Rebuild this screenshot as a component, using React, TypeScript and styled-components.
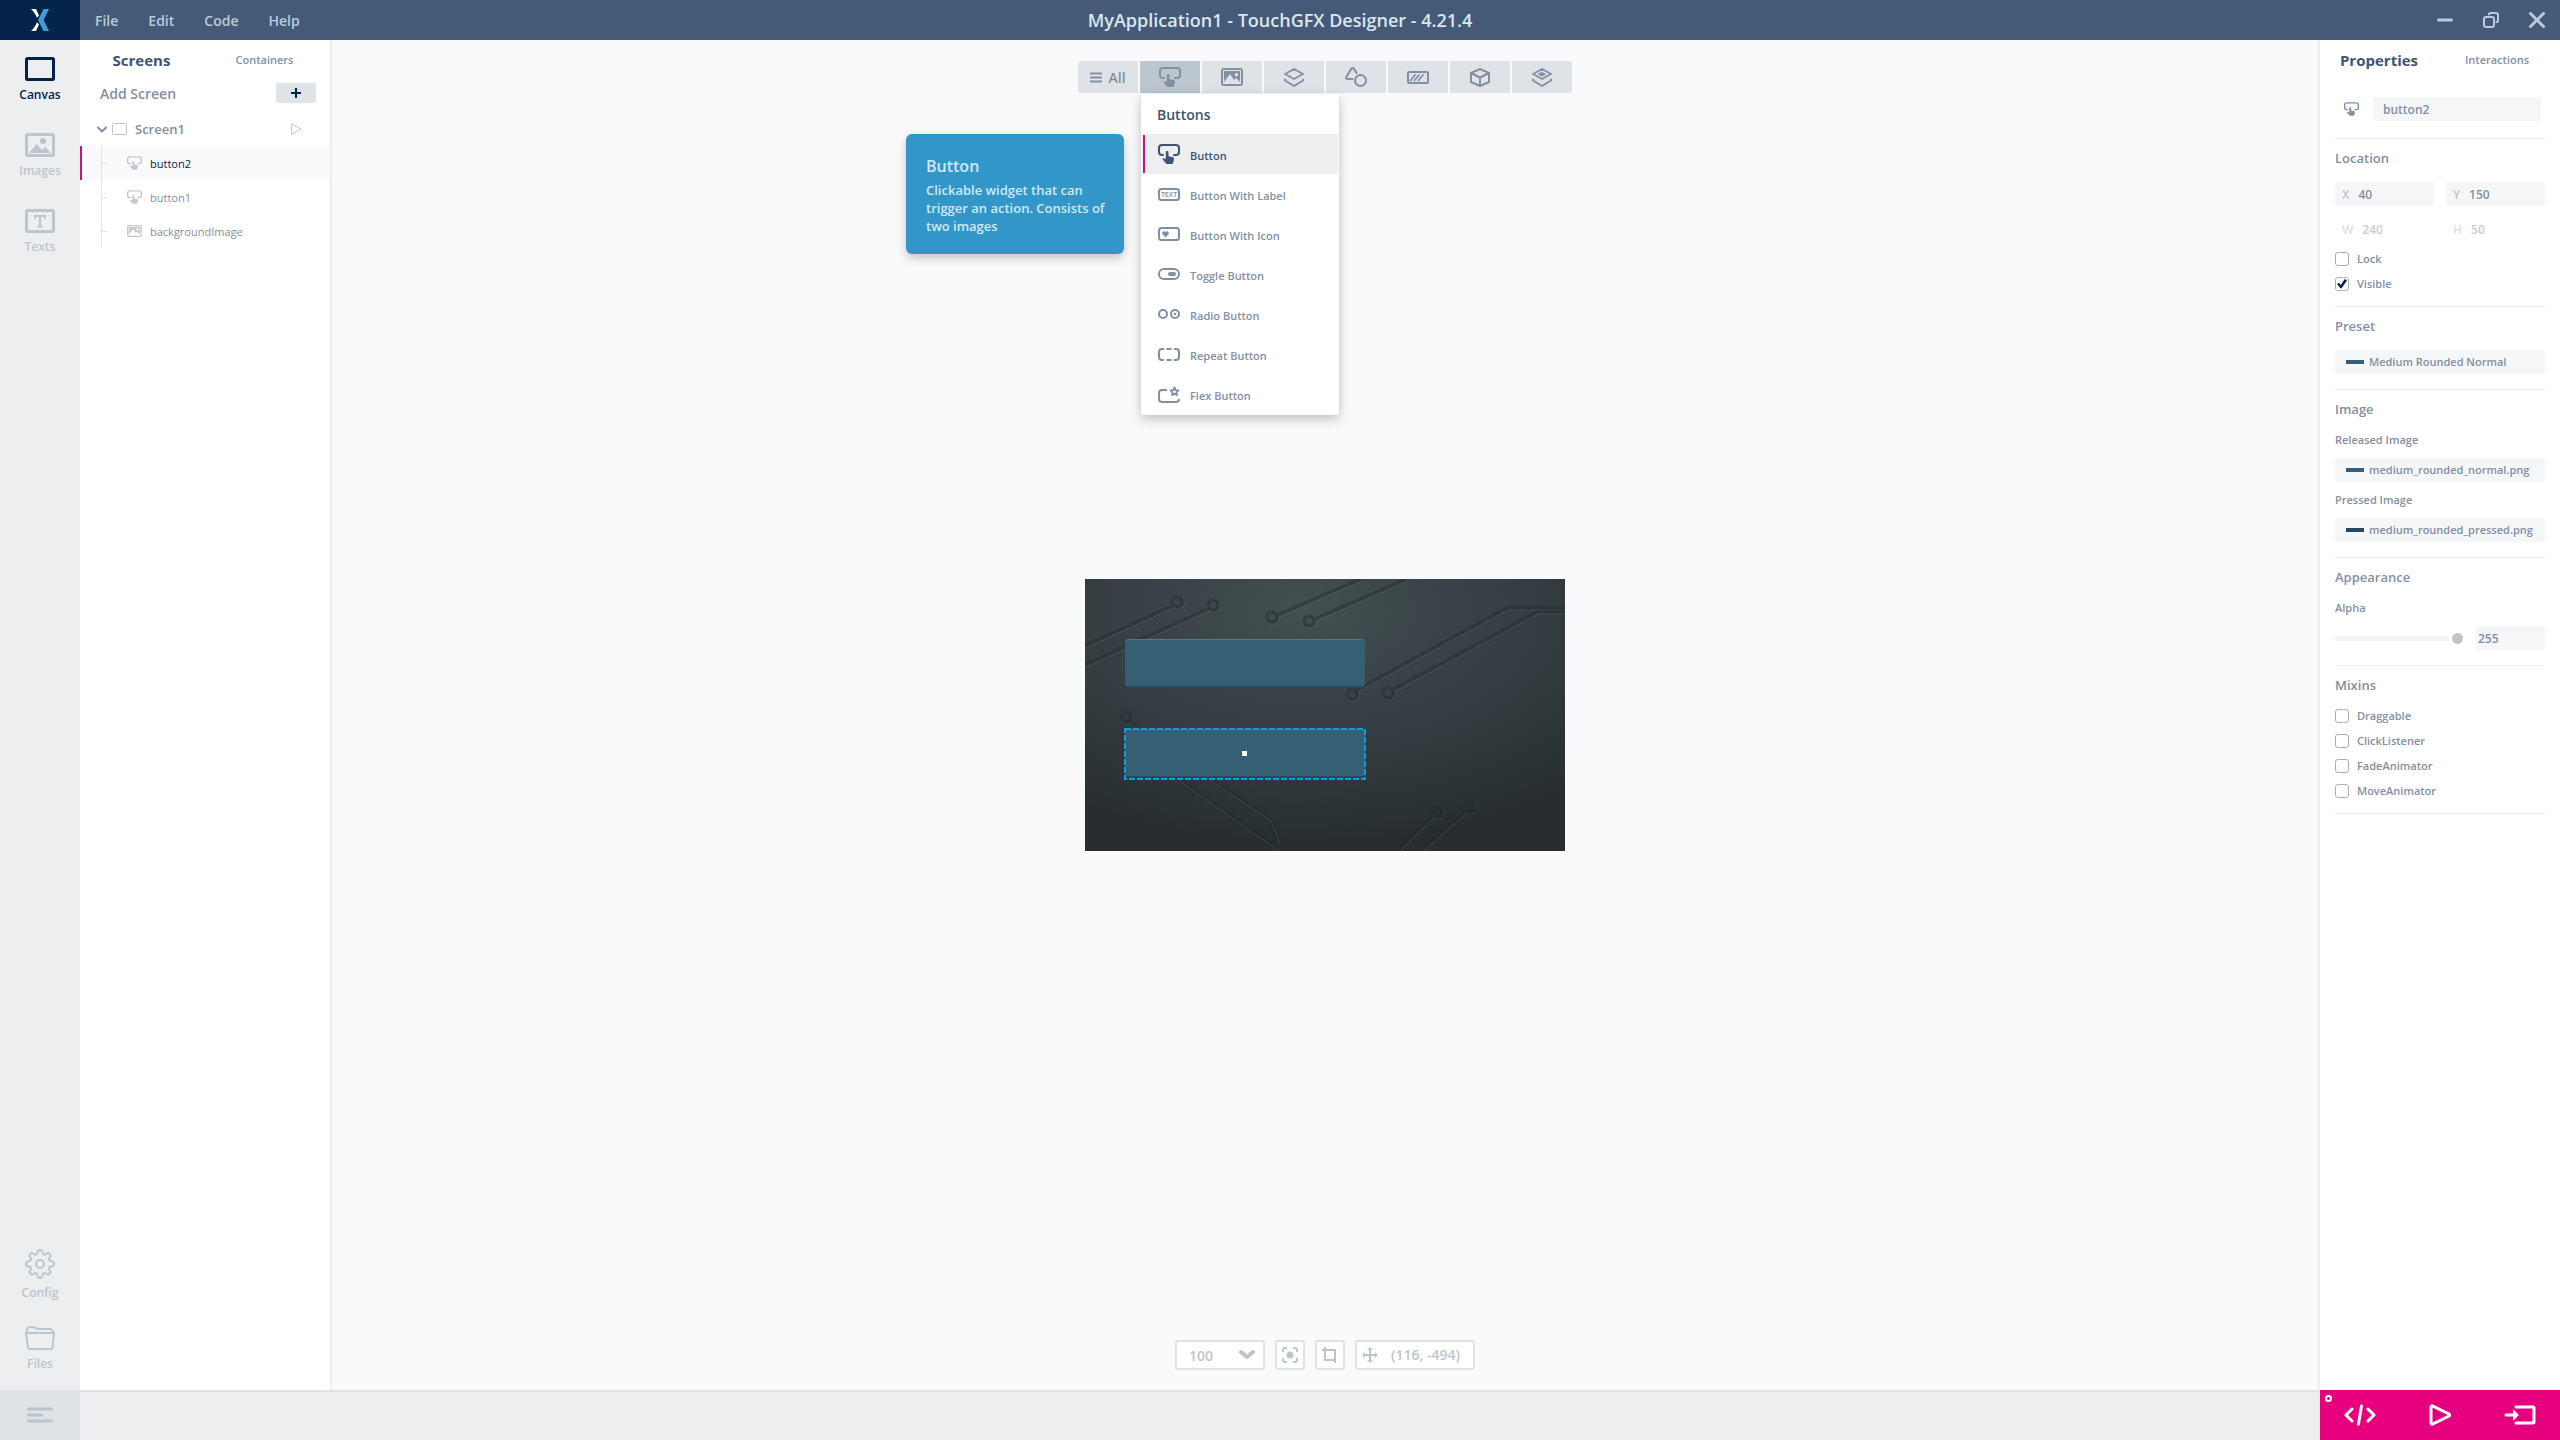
import React from "react";
import styled, { createGlobalStyle, css } from "styled-components";

const c = {
  navy: "#03234b",
  header: "#445a78",
  headerText: "#b9ccd8",
  rail: "#eceef0",
  line: "#dfe3e6",
  cell: "#dfe3e7",
  muted: "#bcc5cc",
  text: "#838fa3",
  strong: "#3f5475",
  field: "#f5f6f8",
  canvas: "#fafafc",
  pink: "#e6007e",
  accent: "#c6147c",
  blue: "#3297c8",
};

const GlobalStyle = createGlobalStyle`
  *, *::before, *::after { box-sizing: border-box; }
  body { margin: 0; }
  body, button, input, select {
    font-family: "Open Sans", "Noto Sans", sans-serif;
    font-size: 12px;
    font-weight: 600;
    color: ${c.text};
  }
  button { border: 0; padding: 0; background: none; cursor: pointer; }
  ul { list-style: none; margin: 0; padding: 0; }
  h1, h2, h3, p { margin: 0; }
  svg { display: block; flex: none; }
`;

const Shell = styled.div`
  display: flex;
  flex-direction: column;
  height: 100vh;
  background: #fff;
`;

/* ---------- title bar ---------- */

const TitleBar = styled.header`
  display: grid;
  grid-template-columns: 1fr auto 1fr;
  align-items: center;
  height: 40px;
  flex: none;
  background: ${c.header};
`;
const TitleLeft = styled.div`
  display: flex;
  align-items: center;
  height: 100%;
`;
const Logo = styled.div`
  display: grid;
  place-items: center;
  width: 80px;
  height: 100%;
  background: ${c.navy};
`;
const MenuBar = styled.nav`
  display: flex;
  gap: 30px;
  padding: 1px 0 0 15px;
`;
const MenuButton = styled.button`
  font-size: 14px;
  line-height: 20px;
  color: ${c.headerText};
`;
const AppTitle = styled.h1`
  font-size: 18px;
  line-height: 24px;
  font-weight: 600;
  color: #dbe6ee;
`;
const WindowButtons = styled.div`
  display: flex;
  justify-content: flex-end;
  color: ${c.headerText};
`;
const WindowButton = styled.button`
  display: grid;
  place-items: center;
  width: 46px;
  height: 40px;
  color: inherit;
`;

/* ---------- frame ---------- */

const Body = styled.div`
  display: flex;
  flex: 1;
  min-height: 0;
`;

const Rail = styled.nav`
  display: flex;
  flex-direction: column;
  justify-content: space-between;
  width: 80px;
  flex: none;
  padding: 17px 0;
  background: ${c.rail};
`;
const RailGroup = styled.div<{ $gap: number }>`
  display: flex;
  flex-direction: column;
  gap: ${(p) => p.$gap}px;
`;
const RailButton = styled.button<{ $active?: boolean }>`
  display: flex;
  flex-direction: column;
  align-items: center;
  gap: 5px;
  line-height: 18px;
  color: ${(p) => (p.$active ? c.navy : c.muted)};
`;

const SidePanel = styled.aside<{ $side: "left" | "right" }>`
  display: flex;
  flex-direction: column;
  flex: none;
  ${(p) =>
    p.$side === "left"
      ? css`
          width: 252px;
          border-right: 2px solid ${c.rail};
        `
      : css`
          width: 242px;
          border-left: 2px solid ${c.rail};
        `}
`;
const Tabs = styled.div`
  display: flex;
  height: 40px;
  padding-right: 4px;
`;
const Tab = styled.button<{ $active?: boolean }>`
  flex: 1 1 0;
  font-size: 11px;
  line-height: 20px;
  ${(p) =>
    p.$active &&
    css`
      font-size: 15px;
      font-weight: 700;
      color: ${c.strong};
    `}
`;

/* ---------- screens tree ---------- */

const AddRow = styled.div`
  display: flex;
  align-items: center;
  justify-content: space-between;
  height: 26px;
  padding: 0 14px 0 20px;
  font-size: 14px;
`;
const AddButton = styled.button`
  display: grid;
  place-items: center;
  width: 40px;
  height: 20px;
  border-radius: 3px;
  background: ${c.line};
  color: ${c.navy};
`;
const ScreenRow = styled.div`
  display: flex;
  align-items: center;
  gap: 5px;
  height: 34px;
  margin-top: 6px;
  padding: 0 28px 0 17px;
`;
const ScreenName = styled.span`
  flex: 1;
  padding-left: 3px;
  font-size: 13px;
  line-height: 18px;
`;
const TreeRow = styled.li<{ $active?: boolean }>`
  display: flex;
  align-items: center;
  height: 34px;
  border-left: 2px solid ${(p) => (p.$active ? c.accent : "transparent")};
  padding-left: 19px;
  font-size: 11px;
  font-weight: 500;
  line-height: 18px;
  background: ${(p) => (p.$active ? c.canvas : "transparent")};
  background-clip: padding-box;
  color: ${(p) => (p.$active ? c.navy : c.text)};
  svg { color: #c3c7cb; margin: 0 8px 0 20px; }
`;
const TreeName = styled.span`
  padding-top: 1px;
`;
const Guide = styled.span`
  display: flex;
  align-items: center;
  width: 6px;
  height: 100%;
  border-left: 1px solid ${c.line};
  &::after {
    content: "";
    flex: 1;
    height: 1px;
    background: ${c.line};
  }
`;

/* ---------- workspace ---------- */

const Workspace = styled.main`
  display: flex;
  flex-direction: column;
  align-items: center;
  justify-content: space-between;
  flex: 1;
  min-width: 0;
  background: ${c.canvas};
`;
const ToolbarArea = styled.div`
  height: 53px;
  padding-top: 21px;
`;
const Toolbar = styled.div`
  display: flex;
  gap: 2px;
`;
const ToolSlot = styled.div`
  position: relative;
`;
const ToolButton = styled.button<{ $active?: boolean; $edge?: "first" | "last" }>`
  display: flex;
  align-items: center;
  justify-content: center;
  gap: 6px;
  width: 60px;
  height: 32px;
  font-size: 14px;
  background: ${(p) => (p.$active ? "#bcc6cf" : c.cell)};
  border-radius: ${(p) =>
    p.$edge === "first" ? "3px 0 0 3px" : p.$edge === "last" ? "0 3px 3px 0" : 0};
`;
const Dropdown = styled.div`
  position: absolute;
  z-index: 2;
  top: 33px;
  left: 1px;
  width: 198px;
  padding: 0 1px 1px;
  border-radius: 0 0 3px 3px;
  background: #fff;
  box-shadow: 0 4px 12px rgba(40, 40, 50, 0.28);
`;
const DropdownTitle = styled.h2`
  padding: 1px 15px 0;
  font-size: 14px;
  line-height: 39px;
  font-weight: 600;
  color: ${c.strong};
`;
const WidgetButton = styled.button<{ $active?: boolean }>`
  display: flex;
  align-items: center;
  gap: 10px;
  width: 100%;
  height: 40px;
  padding: 0 13px 0 1px;
  font-size: 11px;
  line-height: 18px;
  color: ${(p) => (p.$active ? c.strong : c.text)};
  background: ${(p) => (p.$active ? c.rail : "transparent")};
  &::before {
    content: "";
    width: 2px;
    height: 38px;
    margin-right: 3px;
    background: ${(p) => (p.$active ? c.accent : "transparent")};
  }
`;
const WidgetName = styled.span`
  padding-top: 3px;
`;
const Tooltip = styled.div`
  position: absolute;
  top: 40px;
  right: calc(100% + 17px);
  width: 218px;
  height: 120px;
  padding: 20px 16px 0 20px;
  border-radius: 6px;
  background: ${c.blue};
  box-shadow: 0 4px 10px rgba(40, 40, 50, 0.25);
  color: #cfe8f4;
  font-size: 13px;
  line-height: 18px;
`;
const TooltipTitle = styled.h3`
  font-size: 16px;
  line-height: 24px;
  margin-bottom: 3px;
  font-weight: 600;
`;

const Display = styled.div`
  position: relative;
  width: 480px;
  height: 272px;
  background: #343d40;
`;
const Widget = styled.div<{ $x: number; $y: number }>`
  position: absolute;
  left: ${(p) => p.$x}px;
  top: ${(p) => p.$y}px;
  width: 240px;
  height: 49px;
  border-radius: 4px;
  background: #355f75;
  border-top: 1px solid #4f7b8e;
  border-bottom: 2px solid #264a61;
`;
const Selection = styled.svg`
  position: absolute;
  left: 39px;
  top: 149px;
`;

const ViewBar = styled.div`
  display: flex;
  gap: 10px;
  height: 53px;
  padding: 3px 0 20px;
  color: ${c.muted};
`;
const viewBox = css`
  height: 30px;
  border: 2px solid ${c.line};
  border-radius: 3px;
  background: #fff;
  font-size: 14px;
  color: ${c.muted};
`;
const ZoomBox = styled.label`
  display: grid;
  grid-template-columns: 1fr 16px 8px;
  align-items: center;
  width: 90px;
  ${viewBox}
  svg { grid-column: 2; grid-row: 1; pointer-events: none; }
`;
const ZoomSelect = styled.select`
  grid-column: 1 / -1;
  grid-row: 1;
  appearance: none;
  border: 0;
  padding: 0 0 0 12px;
  height: 26px;
  background: transparent;
  font-size: 14px;
  color: ${c.muted};
`;
const ViewButton = styled.button`
  display: grid;
  place-items: center;
  width: 30px;
  ${viewBox}
`;
const Coordinates = styled.output`
  display: flex;
  align-items: center;
  gap: 13px;
  width: 120px;
  padding-left: 5px;
  line-height: 20px;
  ${viewBox}
`;

/* ---------- properties ---------- */

const NameRow = styled.div`
  display: flex;
  align-items: center;
  gap: 14px;
  padding: 17px 19px 17px 24px;
`;
const fieldBox = css`
  height: 24px;
  border: 0;
  border-radius: 3px;
  background: ${c.field};
`;
const NameInput = styled.input`
  flex: 1;
  min-width: 0;
  padding: 0 10px;
  ${fieldBox}
`;
const Sections = styled.div`
  margin: 0 15px;
  border-bottom: 1px solid ${c.rail};
`;
const Section = styled.section`
  border-top: 1px solid ${c.rail};
  padding: 9px 0 10px;
`;
const SectionTitle = styled.h2`
  margin-bottom: 8px;
  font-size: 13px;
  line-height: 20px;
  font-weight: 600;
`;
const Fields = styled.div`
  padding: 6px 0 5px;
`;
const FieldGrid = styled(Fields)`
  display: grid;
  grid-template-columns: repeat(2, minmax(0, 1fr));
  gap: 11px 12px;
`;
const NumberField = styled.label<{ $disabled?: boolean }>`
  display: flex;
  align-items: center;
  gap: 9px;
  padding-left: 7px;
  ${fieldBox}
  color: ${c.muted};
  ${(p) => p.$disabled && "background: transparent; color: #dcdfe2;"}
  input {
    flex: 1;
    min-width: 0;
    padding: 0;
    border: 0;
    background: none;
    color: ${(p) => (p.$disabled ? "#c9cdd1" : c.text)};
  }
`;
const pickLabel = css`
  display: block;
  font-size: 11px;
  line-height: 14px;
  margin-bottom: 11px;
`;
const PickLabel = styled.div`
  ${pickLabel}
`;
const SliderLabel = styled.label`
  ${pickLabel}
`;
const Picker = styled.button`
  display: flex;
  align-items: center;
  gap: 5px;
  width: 100%;
  padding-left: 11px;
  font-size: 11px;
  line-height: 16px;
  ${fieldBox}
  & + ${PickLabel} { margin-top: 11px; }
`;
const Swatch = styled.span<{ $dark?: boolean }>`
  flex: none;
  width: 18px;
  height: 4px;
  background: ${(p) => (p.$dark ? "#2a4459" : "#35607a")};
`;
const CheckRow = styled.label`
  display: flex;
  align-items: center;
  gap: 8px;
  height: 25px;
  font-size: 11px;
`;
const Checkbox = styled.input`
  appearance: none;
  display: grid;
  place-items: center;
  width: 14px;
  height: 14px;
  margin: 0;
  border: 1px solid #a9b0b8;
  border-radius: 3px;
  background: #fff;
  &:checked::after {
    content: "";
    width: 10px;
    height: 10px;
    background: ${c.navy};
    clip-path: polygon(0 55%, 18% 42%, 38% 64%, 78% 5%, 100% 20%, 44% 100%, 32% 96%);
  }
`;
const SliderRow = styled.div`
  display: flex;
  align-items: center;
  gap: 13px;
`;
const Slider = styled.input`
  flex: 1;
  min-width: 0;
  appearance: none;
  margin: 0;
  height: 11px;
  background: linear-gradient(#f3f4f5, #f3f4f5) center / 100% 5px no-repeat;
  &::-webkit-slider-thumb {
    appearance: none;
    width: 11px;
    height: 11px;
    border-radius: 50%;
    background: #bfc6cb;
    box-shadow: 0 0 0 3px #fff;
  }
`;
const AlphaInput = styled.input`
  width: 69px;
  padding: 0 2px;
  ${fieldBox}
`;

/* ---------- bottom bar ---------- */

const BottomBar = styled.footer`
  display: flex;
  justify-content: space-between;
  height: 50px;
  flex: none;
  background: ${c.rail};
  box-shadow: inset 0 2px ${c.line};
`;
const LogButton = styled.button`
  display: grid;
  place-items: center;
  width: 80px;
  background: ${c.cell};
  color: #bcc5cc;
`;
const Actions = styled.div`
  position: relative;
  display: flex;
  width: 240px;
  background: ${c.pink};
`;
const ActionButton = styled.button`
  display: grid;
  place-items: center;
  flex: 1;
  color: #fff;
`;
const StatusDot = styled.span`
  position: absolute;
  left: 5px;
  top: 5px;
  width: 7px;
  height: 7px;
  border: 2px solid #fff;
  border-radius: 50%;
`;

/* ---------- icons ---------- */

type IconProps = { w: number; h: number; vb?: string; sw?: number; children: React.ReactNode };
const Icon = ({ w, h, vb, sw = 2, children }: IconProps) => (
  <svg
    width={w}
    height={h}
    viewBox={vb ?? `0 0 ${w} ${h}`}
    fill="none"
    stroke="currentColor"
    strokeWidth={sw}
    strokeLinecap="round"
    strokeLinejoin="round"
    aria-hidden="true"
  >
    {children}
  </svg>
);

const TapIcon = ({ w = 22, h = 20 }: { w?: number; h?: number }) => (
  <Icon w={w} h={h} vb="0 0 22 20">
    <path d="M5 11H4a3 3 0 0 1-3-3V4a3 3 0 0 1 3-3h14a3 3 0 0 1 3 3v4a3 3 0 0 1-3 3h-2" />
    <path
      d="M7.800 8.200c0-1.700 2.700-1.700 2.700 0v4l4 .9c1 .3 1.600 1 1.400 2l-.6 3.300-1.100 1.600H8.400L4.400 15c.6-1.300 2-1 3.400.3z"
      fill="currentColor"
      stroke="none"
    />
  </Icon>
);
const PictureIcon = ({ w, h }: { w: number; h: number }) => (
  <Icon w={w} h={h} vb="0 0 22 18">
    <rect x="1" y="1" width="20" height="16" rx="1.5" />
    <path
      fillRule="evenodd"
      d="M3 3h16v11l-4-4-2 2-4-6-6 8zM15.5 5a1.8 1.8 0 1 0 0 3.600 1.800 1.800 0 0 0 0-3.600z"
      fill="currentColor"
      stroke="none"
    />
  </Icon>
);

const LogoIcon = () => (
  <svg width="18" height="22" viewBox="0 0 18 22" aria-hidden="true">
    <path d="M0 0h5l3 6.600-2 2.200C4.500 5 2 1.800 0 0zM0 22h5l3-6.600-2-2.200C4.500 17 2 20.200 0 22z" fill="#fff" />
    <path d="M12.500 0H18l-5.400 11L18 22h-5.500L7 11z" fill="#3c9fd0" />
  </svg>
);
const CanvasIcon = () => (
  <Icon w={30} h={24} sw={3}>
    <rect x="1.5" y="1.5" width="27" height="21" rx="1" />
  </Icon>
);
const ImagesIcon = () => (
  <Icon w={30} h={24}>
    <rect x="1.5" y="1.5" width="27" height="21" rx="1" strokeWidth="3" />
    <path d="M4 20l7.500-9 5.500 6 3-3 6 6z" fill="currentColor" stroke="none" />
    <circle cx="18" cy="8" r="3" fill="currentColor" stroke="none" />
  </Icon>
);
const TextsIcon = () => (
  <Icon w={30} h={24}>
    <rect x="1.5" y="1.5" width="27" height="21" rx="1" strokeWidth="3" />
    <path d="M10 9.500V7h10v2.500M15 7v10.500M12.500 17.500h5" strokeLinecap="butt" strokeLinejoin="miter" />
  </Icon>
);
const GearIcon = () => (
  <Icon w={30} h={30}>
    <circle cx="15" cy="15" r="4" />
    <path d="M12.300 4.200c.2-1.900.9-3.200 2.700-3.200s2.500 1.300 2.700 3.200c.2 1.300 1.700 1.900 2.700 1.100 1.500-1.200 3-1.600 4.200-.3 1.300 1.300.9 2.700-.3 4.200-.8 1.100-.2 2.500 1.100 2.700 1.900.2 3.600.9 3.600 2.800s-1.700 2.800-3.600 3c-1.300.2-1.900 1.600-1.100 2.700 1.200 1.500 1.600 2.900.3 4.200-1.200 1.300-2.700.9-4.200-.3-1-.8-2.500-.2-2.700 1.100-.2 1.900-.9 3.600-2.700 3.600s-2.500-1.700-2.700-3.600c-.2-1.300-1.700-1.900-2.700-1.100-1.500 1.200-3 1.600-4.200.3-1.300-1.300-.9-2.700.3-4.200.8-1.100.2-2.500-1.100-2.700C2.700 17.500 1 16.800 1 14.900s1.700-2.800 3.600-3c1.300-.2 1.900-1.600 1.100-2.700C4.500 7.700 4.100 6.300 5.400 5c1.200-1.300 2.700-.9 4.200.3 1 .8 2.500.2 2.700-1.100z" />
  </Icon>
);
const FolderIcon = () => (
  <Icon w={30} h={24}>
    <path d="M1 7h28l-1.500 14.500a2 2 0 0 1-2 1.500H5a2 2 0 0 1-2-1.500L1 7l1.500-4.500C3 1 5 1 7 1c3 0 4 2 7 2h11c2 0 3 1.500 4 4" />
  </Icon>
);
const MoreIcon = () => (
  <Icon w={26} h={16} sw={3}>
    <path d="M1.500 2h23M1.500 8h13M1.500 14h23" />
  </Icon>
);

const LayersIcon = ({ dot }: { dot?: boolean }) => (
  <Icon w={20} h={19}>
    <path d="M10 1l9 5-9 5-9-5z" />
    <path d="M1 11.500v1l9 5.500 9-5.500v-1" />
    {dot && <path d="M10 4.500l3.500 1.700L10 8 6.500 6.200z" fill="currentColor" strokeWidth="1" />}
  </Icon>
);
const ShapesIcon = () => (
  <Icon w={22} h={20}>
    <circle cx="15.500" cy="13.500" r="5.500" />
    <path d="M7.500 12H3c-1.600 0-2.300-1-1.600-2.300L6.300 1.900c.7-1.200 2-1.200 2.700 0l2.500 4" />
  </Icon>
);
const ProgressIcon = () => (
  <Icon w={22} h={13}>
    <rect x="1" y="1" width="20" height="11" rx="1" />
    <path d="M3.500 9.500L8 4M7.500 9.500L12 4M11.500 9.500L16 4" strokeWidth="1.800" />
  </Icon>
);
const CubeIcon = () => (
  <Icon w={20} h={19}>
    <path d="M10 1l9 4v9l-9 4-9-4V5zM1 5l9 4.500L19 5M10 9.500V18" />
  </Icon>
);
const ListIcon = () => (
  <Icon w={12} h={11}>
    <path d="M0 1.500h12M0 5.500h12M0 9.500h12" strokeLinecap="butt" />
  </Icon>
);

const LabelButtonIcon = () => (
  <Icon w={22} h={13}>
    <rect x="1" y="1" width="20" height="11" rx="2.500" />
    <text x="11" y="9" fontSize="7" fontWeight="600" textAnchor="middle" fill="currentColor" stroke="none">
      TEXT
    </text>
  </Icon>
);
const IconButtonIcon = () => (
  <Icon w={22} h={14}>
    <rect x="1" y="1" width="20" height="12" rx="2.500" />
    <path d="M7.500 10.500L4.300 7C3.500 5 6 3 7.500 5c1.500-2 4 0 3.200 2z" fill="currentColor" stroke="none" />
  </Icon>
);
const ToggleIcon = () => (
  <Icon w={22} h={12}>
    <rect x="1" y="1" width="20" height="10" rx="5" />
    <rect x="10" y="4" width="8" height="4" rx="2" fill="currentColor" stroke="none" />
  </Icon>
);
const RadioIcon = () => (
  <Icon w={22} h={10}>
    <circle cx="5" cy="5" r="4" />
    <circle cx="17" cy="5" r="4" />
    <circle cx="17" cy="5" r="1.300" fill="currentColor" stroke="none" />
  </Icon>
);
const RepeatIcon = () => (
  <Icon w={22} h={13}>
    <path
      d="M6 1H4a3 3 0 0 0-3 3v5a3 3 0 0 0 3 3h2M16 1h2a3 3 0 0 1 3 3v5a3 3 0 0 1-3 3h-2M8.500 1h5M8.500 12h5"
      strokeLinecap="butt"
    />
  </Icon>
);
const FlexIcon = () => (
  <Icon w={22} h={17}>
    <path d="M9 4H4a3 3 0 0 0-3 3v6a3 3 0 0 0 3 3h14a3 3 0 0 0 3-3" strokeLinecap="butt" />
    <path d="M16.500 1.500l1.200 2.600 2.800.3-2.100 1.900.6 2.800-2.500-1.400-2.500 1.400.6-2.800-2.100-1.900 2.800-.3z" strokeWidth="1.800" />
  </Icon>
);

/* ---------- canvas artwork ---------- */

const nodes = [
  [92, 23], [128, 26], [187, 38], [224, 42], [267, 115], [303, 114], [41, 138], [352, 233], [385, 228],
];
const traces = [
  "M87 27L0 67",
  "M123 30L0 86",
  "M193 36L276 0",
  "M230 40L322 0",
  "M272 111L422 29H480",
  "M308 111L452 33H480",
  "M46 142L95 201L193 270",
  "M110 190L185 240L194 262",
  "M348 237L314 270",
  "M381 232L338 270",
];
const Artwork = () => (
  <svg width="480" height="272" viewBox="0 0 480 272" fill="none" aria-hidden="true">
    <defs>
      <radialGradient id="glow" cx="0.46" cy="0.12" r="0.85">
        <stop offset="0" stopColor="#434f51" />
        <stop offset="0.5" stopColor="#363f44" />
        <stop offset="1" stopColor="#282e30" />
      </radialGradient>
    </defs>
    <rect width="480" height="272" fill="url(#glow)" />
    {traces.map((d) => (
      <g key={d}>
        <path d={d} stroke="#20282b" strokeOpacity="0.38" strokeWidth="4" />
        <path d={d} stroke="#6b777a" strokeOpacity="0.35" strokeWidth="1" transform="translate(1 2)" />
      </g>
    ))}
    {nodes.map(([x, y]) => (
      <g key={x}>
        <circle cx={x + 1} cy={y + 1} r="6.500" stroke="#6b777a" strokeOpacity="0.2" />
        <circle cx={x} cy={y} r="5" stroke="#20282b" strokeOpacity="0.48" strokeWidth="3" />
      </g>
    ))}
  </svg>
);

/* ---------- data ---------- */

const tools = [
  { name: "Images", icon: <PictureIcon w={22} h={18} /> },
  { name: "Containers", icon: <LayersIcon /> },
  { name: "Shapes", icon: <ShapesIcon /> },
  { name: "Progress Indicators", icon: <ProgressIcon /> },
  { name: "Miscellaneous", icon: <CubeIcon /> },
  { name: "Custom Containers", icon: <LayersIcon dot /> },
];
const widgets = [
  { name: "Button", icon: <TapIcon /> },
  { name: "Button With Label", icon: <LabelButtonIcon /> },
  { name: "Button With Icon", icon: <IconButtonIcon /> },
  { name: "Toggle Button", icon: <ToggleIcon /> },
  { name: "Radio Button", icon: <RadioIcon /> },
  { name: "Repeat Button", icon: <RepeatIcon /> },
  { name: "Flex Button", icon: <FlexIcon /> },
];
const mixins = ["Draggable", "ClickListener", "FadeAnimator", "MoveAnimator"];

const Check = ({ label, checked }: { label: string; checked?: boolean }) => (
  <CheckRow>
    <Checkbox type="checkbox" defaultChecked={checked} />
    {label}
  </CheckRow>
);
const Num = ({ label, value, disabled }: { label: string; value: number; disabled?: boolean }) => (
  <NumberField $disabled={disabled}>
    {label}
    <input defaultValue={value} disabled={disabled} />
  </NumberField>
);

export default function App() {
  return (
    <Shell>
      <GlobalStyle />
      <TitleBar>
        <TitleLeft>
          <Logo><LogoIcon /></Logo>
          <MenuBar>
            {["File", "Edit", "Code", "Help"].map((m) => <MenuButton key={m}>{m}</MenuButton>)}
          </MenuBar>
        </TitleLeft>
        <AppTitle>MyApplication1 - TouchGFX Designer - 4.21.4</AppTitle>
        <WindowButtons>
          <WindowButton aria-label="Minimize">
            <Icon w={16} h={16} sw={3}><path d="M1.500 8h13" /></Icon>
          </WindowButton>
          <WindowButton aria-label="Restore">
            <Icon w={16} h={16}>
              <rect x="1" y="5" width="10" height="10" rx="2" />
              <path d="M6 2.500C6 1.500 6.500 1 7.500 1H13a2 2 0 0 1 2 2v5.500c0 1-.5 1.500-1.500 1.500" />
            </Icon>
          </WindowButton>
          <WindowButton aria-label="Close">
            <Icon w={16} h={16} sw={3}><path d="M1.500 1.500l13 13M14.500 1.500l-13 13" /></Icon>
          </WindowButton>
        </WindowButtons>
      </TitleBar>

      <Body>
        <Rail>
          <RailGroup $gap={29}>
            <RailButton $active><CanvasIcon />Canvas</RailButton>
            <RailButton><ImagesIcon />Images</RailButton>
            <RailButton><TextsIcon />Texts</RailButton>
          </RailGroup>
          <RailGroup $gap={24}>
            <RailButton><GearIcon />Config</RailButton>
            <RailButton><FolderIcon />Files</RailButton>
          </RailGroup>
        </Rail>

        <SidePanel $side="left">
          <Tabs>
            <Tab $active>Screens</Tab>
            <Tab>Containers</Tab>
          </Tabs>
          <AddRow>
            Add Screen
            <AddButton aria-label="Add screen">
              <Icon w={10} h={10}><path d="M5 0v10M0 5h10" strokeLinecap="butt" /></Icon>
            </AddButton>
          </AddRow>
          <ScreenRow>
            <Icon w={10} h={7}><path d="M1 1.500l4 4 4-4" /></Icon>
            <Icon w={15} h={12} sw={1}><rect x="0.500" y="0.500" width="14" height="11" rx="1" stroke="#bcc5cc" /></Icon>
            <ScreenName>Screen1</ScreenName>
            <Icon w={11} h={12} sw={1}><path d="M1 1l9 5-9 5z" stroke="#bcc5cc" /></Icon>
          </ScreenRow>
          <ul>
            <TreeRow $active><Guide /><TapIcon w={15} h={14} /><TreeName>button2</TreeName></TreeRow>
            <TreeRow><Guide /><TapIcon w={15} h={14} /><TreeName>button1</TreeName></TreeRow>
            <TreeRow><Guide /><PictureIcon w={15} h={12} /><TreeName>backgroundImage</TreeName></TreeRow>
          </ul>
        </SidePanel>

        <Workspace>
          <ToolbarArea>
            <Toolbar>
              <ToolButton $edge="first"><ListIcon />All</ToolButton>
              <ToolSlot>
                <ToolButton $active aria-label="Buttons"><TapIcon /></ToolButton>
                <Dropdown>
                  <DropdownTitle>Buttons</DropdownTitle>
                  {widgets.map((w, i) => (
                    <WidgetButton key={w.name} $active={i === 0}>
                      {w.icon}
                      <WidgetName>{w.name}</WidgetName>
                    </WidgetButton>
                  ))}
                  <Tooltip role="tooltip">
                    <TooltipTitle>Button</TooltipTitle>
                    <p>Clickable widget that can trigger an action. Consists of two images</p>
                  </Tooltip>
                </Dropdown>
              </ToolSlot>
              {tools.map((t, i) => (
                <ToolButton key={t.name} aria-label={t.name} $edge={i === tools.length - 1 ? "last" : undefined}>
                  {t.icon}
                </ToolButton>
              ))}
            </Toolbar>
          </ToolbarArea>

          <Display>
            <Artwork />
            <Widget $x={40} $y={60} />
            <Widget $x={40} $y={150} />
            <Selection width="242" height="52" fill="none" aria-hidden="true">
              <rect x="1" y="1" width="240" height="50" stroke="#0a9fdb" strokeWidth="2" strokeDasharray="6 2" />
              <rect x="118" y="23" width="5" height="5" fill="#fff" />
            </Selection>
          </Display>

          <ViewBar>
            <ZoomBox>
              <ZoomSelect aria-label="Zoom" defaultValue="100">
                <option>50</option>
                <option>100</option>
                <option>200</option>
              </ZoomSelect>
              <Icon w={16} h={10} sw={4}><path d="M2 2l6 5 6-5" /></Icon>
            </ZoomBox>
            <ViewButton aria-label="Center canvas">
              <Icon w={16} h={16}>
                <path d="M1 5V3a2 2 0 0 1 2-2h2M11 1h2a2 2 0 0 1 2 2v2M15 11v2a2 2 0 0 1-2 2h-2M5 15H3a2 2 0 0 1-2-2v-2" strokeLinecap="butt" />
                <circle cx="8" cy="8" r="3.500" fill="currentColor" stroke="none" />
              </Icon>
            </ViewButton>
            <ViewButton aria-label="Crop">
              <Icon w={16} h={16}><path d="M3 0v13h10M0 3h13v13" strokeLinecap="butt" strokeLinejoin="miter" /></Icon>
            </ViewButton>
            <Coordinates>
              <Icon w={16} h={16}>
                <path d="M8 2v12M2 8h12" />
                <path d="M8 0l3 3H5zM8 16l3-3H5zM0 8l3-3v6zM16 8l-3-3v6z" fill="currentColor" stroke="none" />
              </Icon>
              (116, -494)
            </Coordinates>
          </ViewBar>
        </Workspace>

        <SidePanel $side="right">
          <Tabs>
            <Tab $active>Properties</Tab>
            <Tab>Interactions</Tab>
          </Tabs>
          <NameRow>
            <TapIcon w={15} h={14} />
            <NameInput aria-label="Name" defaultValue="button2" />
          </NameRow>
          <Sections>
            <Section>
              <SectionTitle>Location</SectionTitle>
              <FieldGrid>
                <Num label="X" value={40} />
                <Num label="Y" value={150} />
                <Num label="W" value={240} disabled />
                <Num label="H" value={50} disabled />
              </FieldGrid>
              <Check label="Lock" />
              <Check label="Visible" checked />
            </Section>
            <Section>
              <SectionTitle>Preset</SectionTitle>
              <Fields>
                <Picker><Swatch />Medium Rounded Normal</Picker>
              </Fields>
            </Section>
            <Section>
              <SectionTitle>Image</SectionTitle>
              <Fields>
                <PickLabel>Released Image</PickLabel>
                <Picker><Swatch />medium_rounded_normal.png</Picker>
                <PickLabel>Pressed Image</PickLabel>
                <Picker><Swatch $dark />medium_rounded_pressed.png</Picker>
              </Fields>
            </Section>
            <Section>
              <SectionTitle>Appearance</SectionTitle>
              <Fields>
                <SliderLabel htmlFor="alpha">Alpha</SliderLabel>
                <SliderRow>
                  <Slider id="alpha" type="range" min={0} max={255} defaultValue={255} />
                  <AlphaInput aria-label="Alpha value" defaultValue="255" />
                </SliderRow>
              </Fields>
            </Section>
            <Section>
              <SectionTitle>Mixins</SectionTitle>
              {mixins.map((m) => <Check key={m} label={m} />)}
            </Section>
          </Sections>
        </SidePanel>
      </Body>

      <BottomBar>
        <LogButton aria-label="Log"><MoreIcon /></LogButton>
        <Actions>
          <StatusDot />
          <ActionButton aria-label="Generate code">
            <Icon w={32} h={22} sw={3}><path d="M8 5L2 11l6 6M24 5l6 6-6 6M17.500 2l-3 18" /></Icon>
          </ActionButton>
          <ActionButton aria-label="Run simulator">
            <Icon w={22} h={22} sw={3}><path d="M2 3.500c0-1.500 1-2 2-1.400L20 10c1 .5 1 1.500 0 2L4 19.900c-1 .6-2 .1-2-1.400z" /></Icon>
          </ActionButton>
          <ActionButton aria-label="Run target">
            <Icon w={32} h={20} sw={3}>
              <path d="M12 2h17a1 1 0 0 1 1 1v14a1 1 0 0 1-1 1H12M2 10h9" />
              <path d="M9 4l6 6-6 6z" fill="currentColor" stroke="none" />
            </Icon>
          </ActionButton>
        </Actions>
      </BottomBar>
    </Shell>
  );
}
